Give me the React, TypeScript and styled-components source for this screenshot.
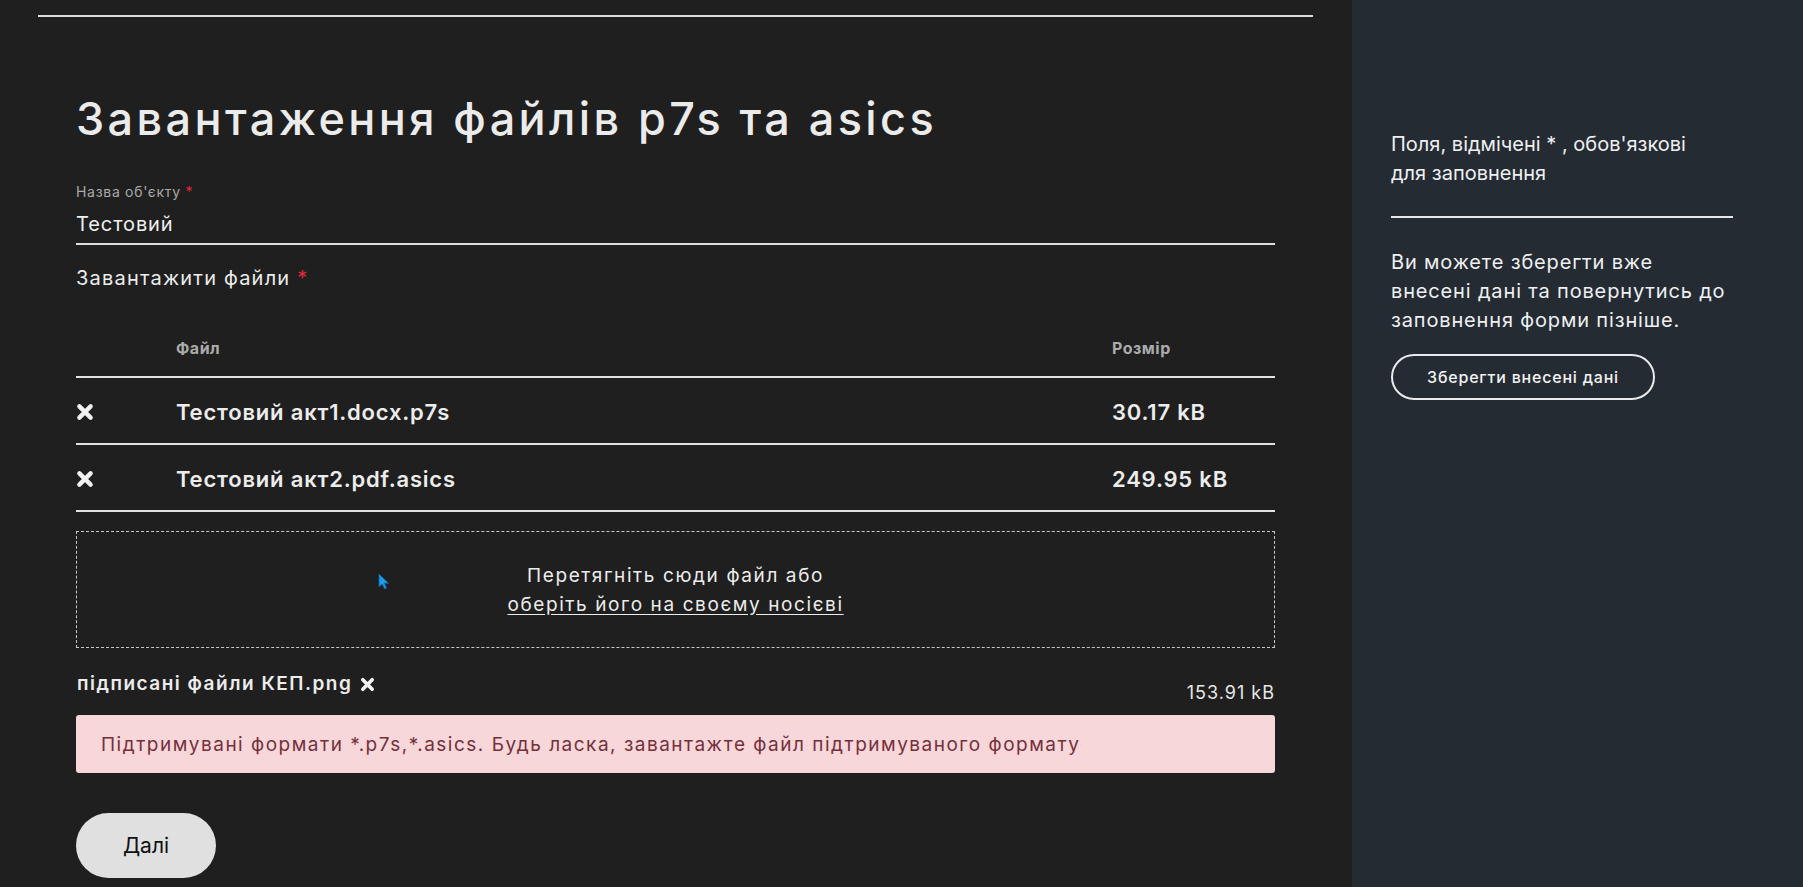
import styled, { createGlobalStyle } from 'styled-components';

const FONT = `Inter, 'DejaVu Sans', sans-serif`;

const GlobalStyle = createGlobalStyle`
  html, body {
    margin: 0;
    padding: 0;
    background: #1f1f1f;
    font-family: ${FONT};
  }
  * {
    box-sizing: border-box;
  }
`;

type FileItem = {
  name: string;
  size: string;
};

const files: FileItem[] = [
  { name: 'Тестовий акт1.docx.p7s', size: '30.17 kB' },
  { name: 'Тестовий акт2.pdf.asics', size: '249.95 kB' },
];

const CrossIcon: React.FC<{ size?: number }> = ({ size = 16 }) => (
  <svg width={size} height={size} viewBox="0 0 16 16" fill="none">
    <path d="M3 3L13 13M13 3L3 13" stroke="#f2f2f2" strokeWidth="3.9" strokeLinecap="round" />
  </svg>
);

const App: React.FC = () => {
  return (
    <>
      <GlobalStyle />
      <Page>
        <Main>
          <TopRule />
          <Form>
            <Title>Завантаження файлів p7s та asics</Title>

            <FieldLabel>
              Назва об'єкту <Required>*</Required>
            </FieldLabel>
            <FieldValue>Тестовий</FieldValue>

            <SectionLabel>
              Завантажити файли <Required>*</Required>
            </SectionLabel>

            <FileTable>
              <HeadCell />
              <HeadCell>Файл</HeadCell>
              <HeadCell>Розмір</HeadCell>
              {files.map((file) => (
                <FileRow key={file.name}>
                  <Cell>
                    <RemoveButton aria-label="Видалити">
                      <CrossIcon size={18} />
                    </RemoveButton>
                  </Cell>
                  <Cell>{file.name}</Cell>
                  <Cell>{file.size}</Cell>
                </FileRow>
              ))}
            </FileTable>

            <DropZone>
              <DropText>Перетягніть сюди файл або</DropText>
              <DropLink href="#">оберіть його на своєму носієві</DropLink>
              <Cursor width="12" height="17" viewBox="0 0 12 17">
                <path d="M1 1L1 14L4.2 11L6.6 16L8.6 15L6.3 10.2L10.6 10.2Z" fill="#1e9be9" stroke="#0d5f96" strokeWidth="0.8" />
              </Cursor>
            </DropZone>

            <RejectedRow>
              <RejectedName>
                підписані файли КЕП.png
                <CrossIcon size={15} />
              </RejectedName>
              <RejectedSize>153.91 kB</RejectedSize>
            </RejectedRow>

            <ErrorBox>
              Підтримувані формати *.p7s,*.asics. Будь ласка, завантажте файл підтримуваного формату
            </ErrorBox>

            <NextButton>Далі</NextButton>
          </Form>
        </Main>

        <Sidebar>
          <SideText>
            Поля, відмічені * , обов'язкові
            <br />
            для заповнення
          </SideText>
          <SideRule />
          <SideText $spacing={0.85}>
            Ви можете зберегти вже
            <br />
            внесені дані та повернутись до
            <br />
            заповнення форми пізніше.
          </SideText>
          <OutlineButton>Зберегти внесені дані</OutlineButton>
        </Sidebar>
      </Page>
    </>
  );
};

export default App;

const Page = styled.div`
  display: grid;
  grid-template-columns: 1352px 1fr;
  height: 100vh;
  overflow: hidden;
`;

const Main = styled.main`
  background: #1f1f1f;
  padding: 15px 39px 0 38px;
  display: flex;
  flex-direction: column;
`;

const TopRule = styled.div`
  height: 2px;
  background: #dcdcdc;
`;

const Form = styled.div`
  padding: 0 38px;
  display: flex;
  flex-direction: column;
  align-items: flex-start;
`;

const Title = styled.h1`
  margin: 75px 0 0;
  font-size: 45px;
  line-height: 54px;
  font-weight: 500;
  color: #ebebeb;
  letter-spacing: 3.4px;
`;

const FieldLabel = styled.div`
  margin-top: 37px;
  font-size: 14px;
  line-height: 18px;
  color: #a9a9a9;
  letter-spacing: 0.7px;
`;

const Required = styled.span`
  color: #e0283a;
`;

const FieldValue = styled.div`
  align-self: stretch;
  margin-top: 10px;
  padding-bottom: 6px;
  font-size: 20px;
  line-height: 26px;
  color: #f0f0f0;
  letter-spacing: 0.9px;
  border-bottom: 2px solid #dedede;
`;

const SectionLabel = styled.div`
  margin-top: 20px;
  font-size: 20px;
  line-height: 26px;
  color: #ececec;
  letter-spacing: 1.2px;
`;

const FileTable = styled.div`
  align-self: stretch;
  display: grid;
  grid-template-columns: 100px 936px 1fr;
`;

const HeadCell = styled.div`
  padding: 47px 0 18px;
  font-size: 16px;
  line-height: 20px;
  font-weight: 700;
  color: #ababab;
  letter-spacing: 0.5px;
  border-bottom: 2px solid #e2e2e2;
`;

const FileRow = styled.div`
  display: contents;
`;

const Cell = styled.div`
  height: 67px;
  padding-top: 3px;
  display: flex;
  align-items: center;
  font-size: 22px;
  font-weight: 600;
  color: #ececec;
  letter-spacing: 0.8px;
  border-bottom: 2px solid #e2e2e2;
`;

const RemoveButton = styled.button`
  background: none;
  border: none;
  padding: 0;
  display: flex;
  cursor: pointer;
`;

const DropZone = styled.div`
  position: relative;
  align-self: stretch;
  margin-top: 19px;
  height: 117px;
  border: 1px dashed #c8c8c8;
  display: flex;
  flex-direction: column;
  align-items: center;
  justify-content: center;
  font-size: 19px;
  line-height: 29px;
  color: #ececec;
  letter-spacing: 1.6px;
`;

const DropText = styled.span``;

const DropLink = styled.a`
  color: #ececec;
  text-decoration: underline;
  text-underline-offset: 3px;
`;

const Cursor = styled.svg`
  position: absolute;
  left: 301px;
  top: 41px;
`;

const RejectedRow = styled.div`
  align-self: stretch;
  margin-top: 24px;
  display: flex;
  justify-content: space-between;
  align-items: flex-start;
`;

const RejectedName = styled.div`
  display: flex;
  align-items: center;
  gap: 8px;
  padding-left: 1px;
  font-size: 19px;
  line-height: 24px;
  font-weight: 600;
  color: #ececec;
  letter-spacing: 1.5px;
`;

const RejectedSize = styled.div`
  padding-top: 9px;
  font-size: 18px;
  line-height: 24px;
  color: #e6e6e6;
  letter-spacing: 1px;
`;

const ErrorBox = styled.div`
  align-self: stretch;
  margin-top: 10px;
  height: 58px;
  padding: 0 25px;
  display: flex;
  align-items: center;
  background: #f8d7da;
  border-radius: 3px;
  font-size: 19px;
  color: #74303a;
  letter-spacing: 1.5px;
`;

const NextButton = styled.button`
  margin-top: 40px;
  width: 140px;
  height: 65px;
  border: none;
  border-radius: 33px;
  background: #e0e0e0;
  font-family: ${FONT};
  font-size: 21px;
  color: #111;
  cursor: pointer;
`;

const Sidebar = styled.aside`
  background: #252b32;
  padding: 130px 0 0 39px;
  display: flex;
  flex-direction: column;
  align-items: flex-start;
`;

const SideText = styled.p<{ $spacing?: number }>`
  margin: 0;
  font-size: 20px;
  line-height: 29px;
  color: #eef0f2;
  letter-spacing: ${({ $spacing }) => $spacing ?? 0}px;
  white-space: nowrap;
`;

const SideRule = styled.div`
  width: 342px;
  height: 2px;
  margin: 28px 0 30px;
  background: #e4e8ec;
`;

const OutlineButton = styled.button`
  margin-top: 19px;
  width: 264px;
  height: 46px;
  border: 2px solid #e8eaec;
  border-radius: 23px;
  background: transparent;
  font-family: ${FONT};
  font-size: 16px;
  font-weight: 500;
  letter-spacing: 0.8px;
  color: #f2f2f2;
  cursor: pointer;
`;
